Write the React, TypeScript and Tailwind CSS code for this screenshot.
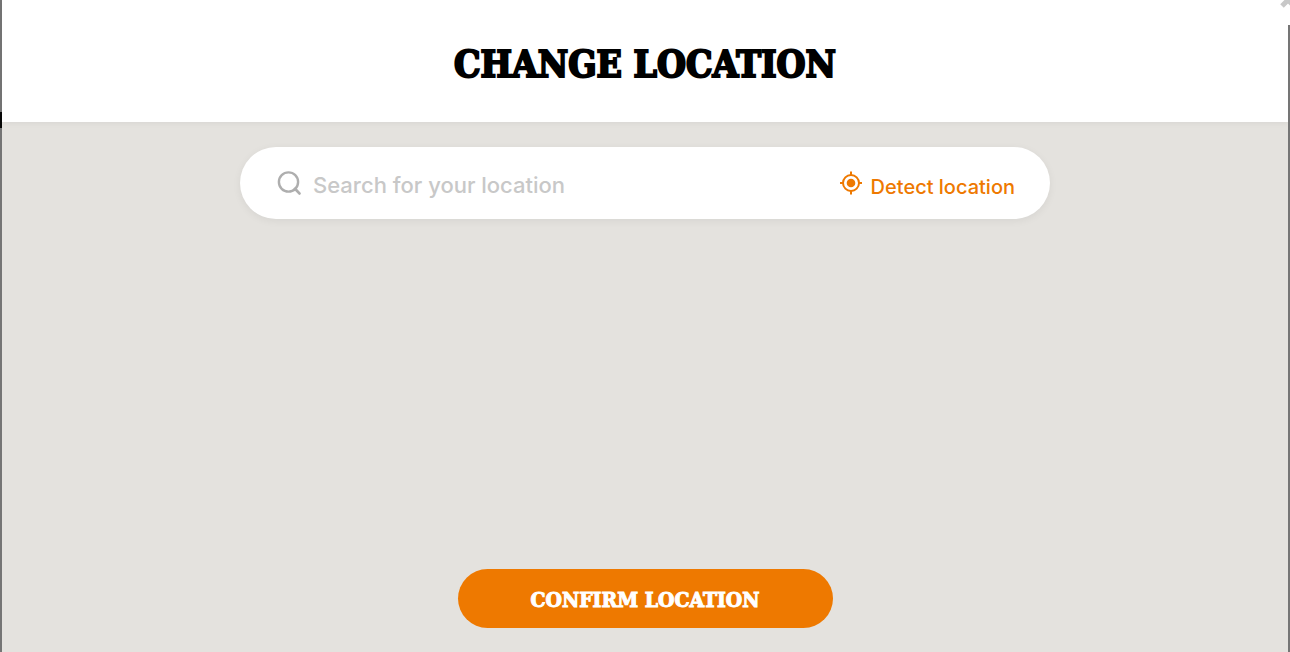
import React, { useState } from "react";

function SearchIcon() {
  return (
    <svg className="size-6 shrink-0" viewBox="0 0 24 24" fill="none" stroke="#aeaeae" strokeWidth="2.4" aria-hidden="true">
      <circle cx="11.5" cy="11" r="9.6" />
      <path d="M18 17.8 22.4 22.4" strokeLinecap="round" strokeWidth="2.8" />
    </svg>
  );
}

function TargetIcon() {
  return (
    <svg className="size-6 shrink-0" viewBox="0 0 24 24" fill="none" stroke="#ee7900" strokeWidth="2" aria-hidden="true">
      <circle cx="12" cy="12" r="8" />
      <circle cx="12" cy="12" r="4.3" fill="#ee7900" stroke="none" />
      <path d="M12 .5V4M12 20v3.5M1 12h3M20 12h3" />
    </svg>
  );
}

export default function App() {
  const [query, setQuery] = useState("");

  return (
    <div className="relative flex min-h-screen overflow-hidden bg-white font-['Inter',sans-serif]">
      <div className="flex w-0.5 shrink-0 flex-col bg-[#757575]">
        <div className="mt-28 h-4 bg-[#080808]" />
      </div>

      <main className="flex min-w-0 flex-1 flex-col bg-[#e4e2de]">
        <header className="flex h-[122px] items-center justify-center bg-white pt-1.5 shadow-[0_1px_6px_rgba(0,0,0,0.06)]">
          <h1 className="font-['DejaVu_Serif_Condensed','DejaVu_Serif',serif] text-[37px] leading-[44px] font-bold text-black [-webkit-text-stroke:2px_black]">
            CHANGE LOCATION
          </h1>
        </header>

        <section className="flex flex-1 flex-col items-center justify-between px-4 pt-[25px] pb-6">
          <form
            className="flex h-[72px] w-full max-w-[810px] items-center rounded-full bg-white pr-[35px] pl-[37px] shadow-[0_2px_8px_rgba(0,0,0,0.06)]"
            onSubmit={(event) => event.preventDefault()}
          >
            <label htmlFor="location" aria-label="Search for your location">
              <SearchIcon />
            </label>
            <input
              id="location"
              type="text"
              value={query}
              onChange={(event) => setQuery(event.target.value)}
              placeholder="Search for your location"
              className="mx-3 h-12 min-w-0 flex-1 bg-transparent pt-1 text-[22px] font-medium text-[#333] outline-none placeholder:text-[#c8c8c8]"
            />
            <button type="button" className="flex shrink-0 cursor-pointer items-center gap-2 text-xl leading-6 font-medium text-[#ee7900]">
              <TargetIcon />
              <span className="pt-2">Detect location</span>
            </button>
          </form>

          <button
            type="button"
            className="h-[59px] w-full max-w-[375px] cursor-pointer rounded-full bg-[#ee7900] pt-0.5 font-['DejaVu_Serif_Condensed','DejaVu_Serif',serif] text-[21px] leading-7 font-bold text-white [-webkit-text-stroke:1px_white]"
          >
            CONFIRM LOCATION
          </button>
        </section>
      </main>

      <div className="flex w-0.5 shrink-0 flex-col bg-[#757575]">
        <div className="h-[25px] bg-white" />
      </div>

      <button type="button" aria-label="Close" className="absolute -top-2 -right-1.5 size-4 cursor-pointer">
        <svg className="size-4" viewBox="0 0 16 16" fill="none" stroke="#c8c8c8" strokeWidth="5" aria-hidden="true">
          <path d="M2 2 14 14M14 2 2 14" />
        </svg>
      </button>
    </div>
  );
}
